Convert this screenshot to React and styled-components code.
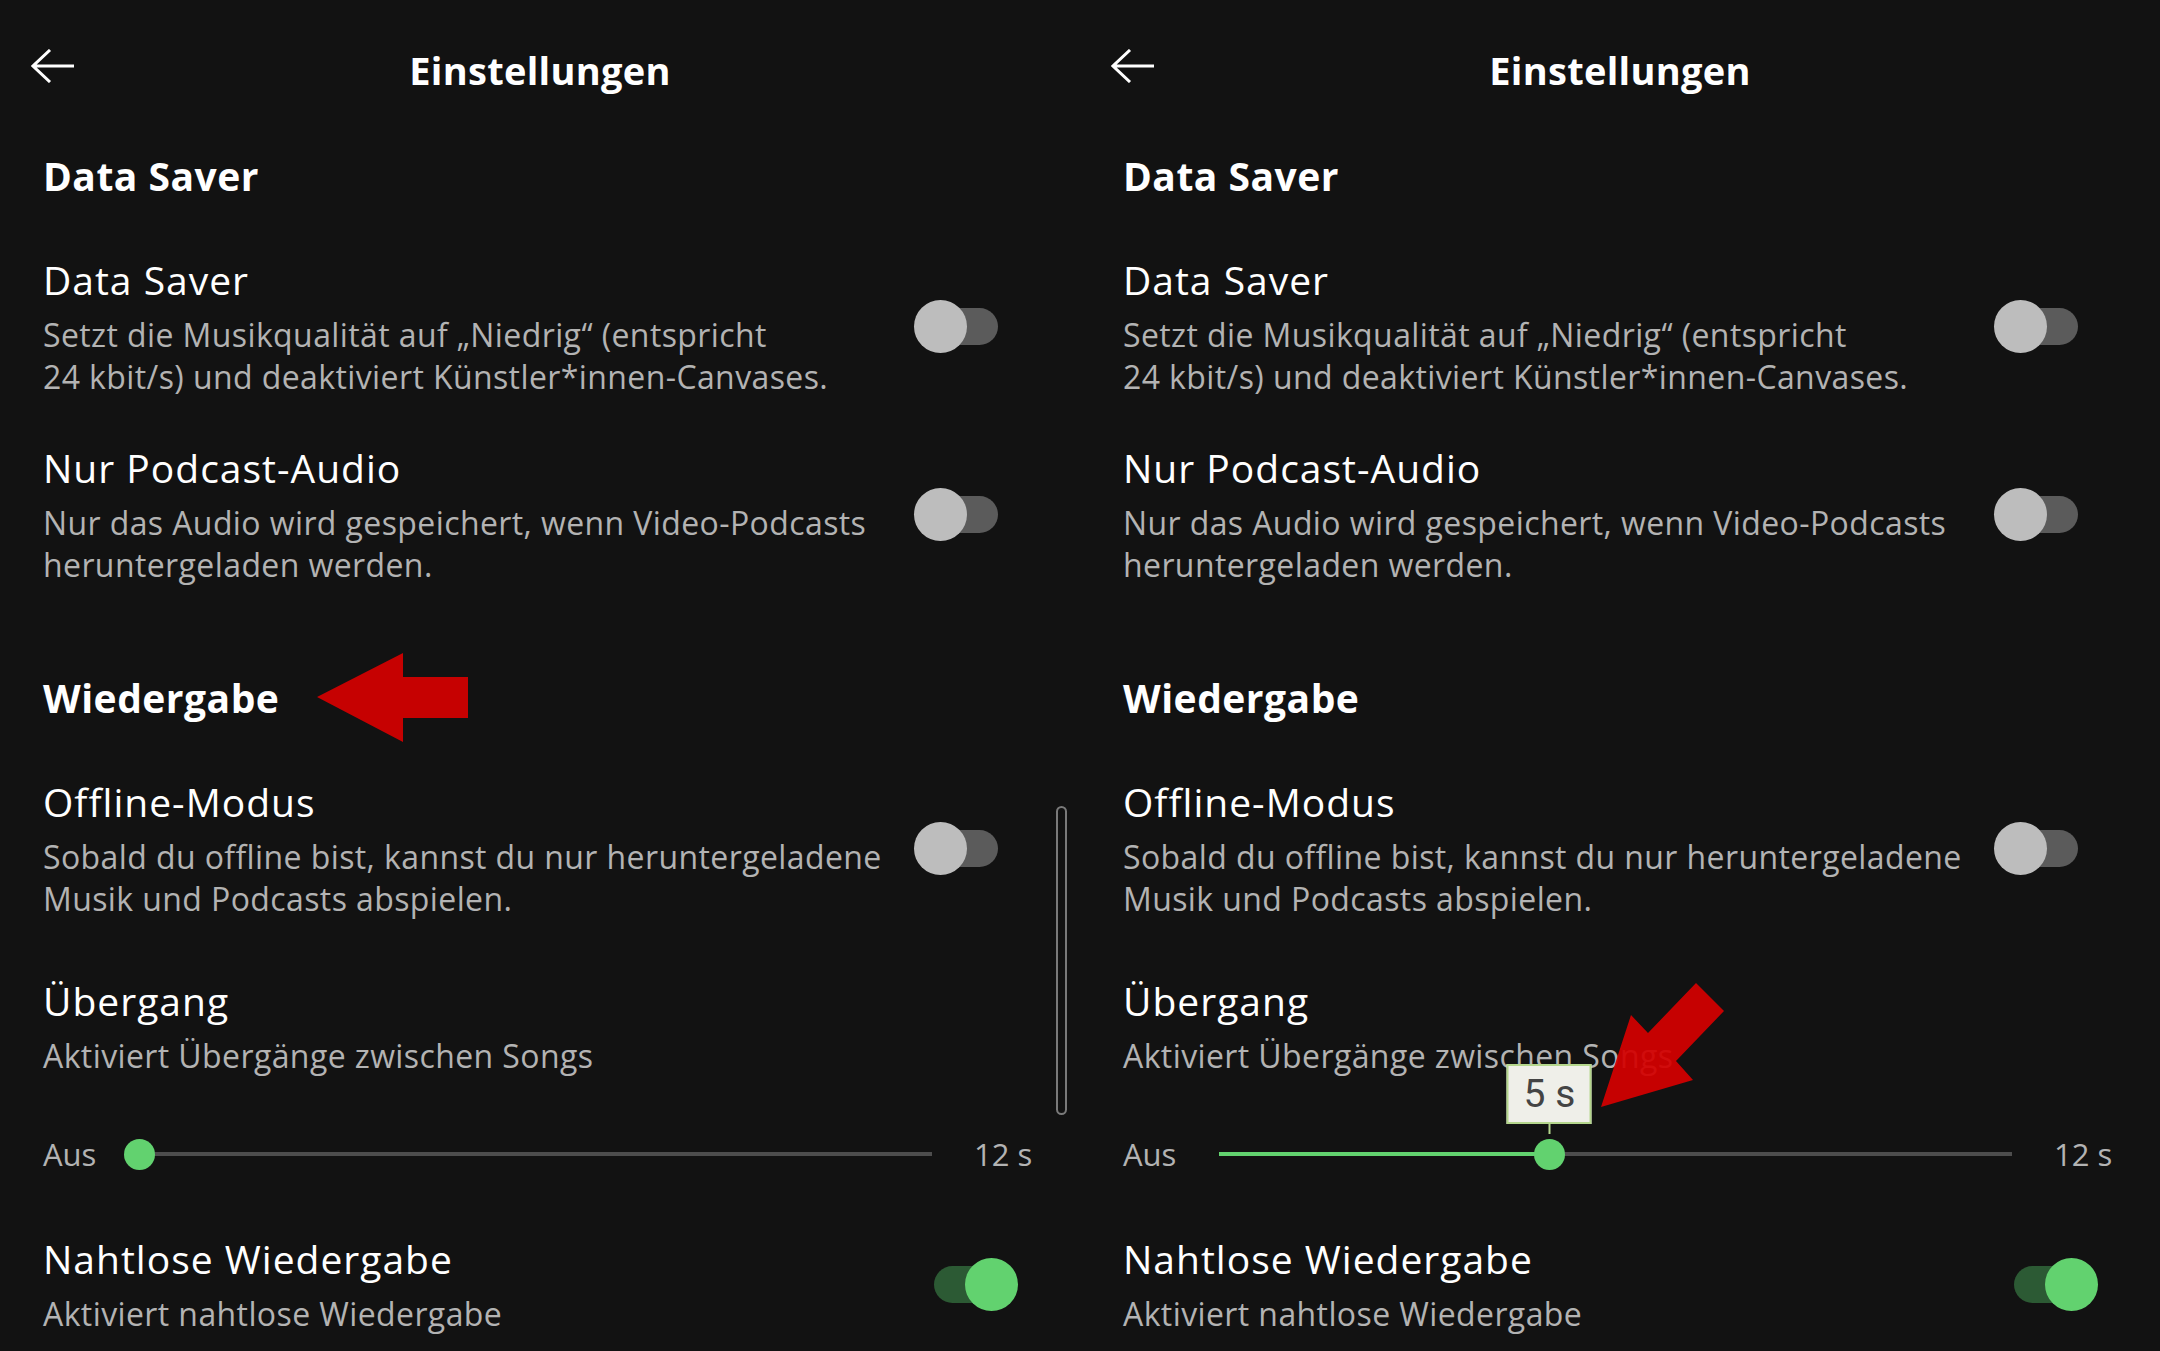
import React from 'react';
import styled, { createGlobalStyle } from 'styled-components';

const GlobalStyle = createGlobalStyle`
  * { box-sizing: border-box; }
  body {
    margin: 0;
    background: #121212;
    font-family: "Open Sans", Lato, sans-serif;
  }
`

const Screens = styled.div`
  display: flex;
  width: 2160px;
  height: 1351px;
  overflow: hidden;
  background: #121212;
`

const Panel = styled.section`
  position: relative;
  width: 1080px;
  flex-shrink: 0;
  color: #fff;
`

const TopBar = styled.header`
  display: grid;
  grid-template-columns: 1fr auto 1fr;
  align-items: center;
  height: 140px;
  padding: 0 31px;
`

const BackButton = styled.button`
  justify-self: start;
  display: flex;
  padding: 0;
  margin-bottom: 8px;
  border: 0;
  background: none;
  color: #fff;
`

const PageTitle = styled.h1`
  margin: 0;
  font-size: 38px;
  font-weight: 700;
  letter-spacing: 0.3px;
  line-height: 52px;
`

const Content = styled.div`
  padding: 0 62px 0 43px;
`

const SectionTitle = styled.h2`
  margin: ${p => p.$top}px 0 30px;
  font-size: 39px;
  font-weight: 700;
  letter-spacing: 0.5px;
  line-height: 52px;
`

const Row = styled.div`
  display: flex;
  align-items: center;
  padding: 22px 0;
`

const TextBlock = styled.div`
  flex: 1;
`

const ItemTitle = styled.div`
  font-size: 39px;
  letter-spacing: 1px;
  line-height: 52px;
  margin-bottom: 8px;
`

const ItemText = styled.div`
  font-size: 32px;
  letter-spacing: 0.4px;
  line-height: 42px;
  color: #b3b3b3;
  white-space: nowrap;
`

const Switch = styled.div`
  position: relative;
  width: 104px;
  height: 52px;
  flex-shrink: 0;
`

const SwitchTrack = styled.div`
  position: absolute;
  left: 20px;
  top: 8px;
  width: 64px;
  height: 37px;
  border-radius: 19px;
  background: ${p => (p.$on ? '#2c5a34' : '#5b5b5b')};
`

const SwitchKnob = styled.div`
  position: absolute;
  top: 0;
  left: ${p => (p.$on ? '51px' : '0')};
  width: 53px;
  height: 53px;
  border-radius: 50%;
  background: ${p => (p.$on ? '#62d26f' : '#bdbdbd')};
`

const CrossfadeBlock = styled.div`
  padding: 33px 0 37px;
`

const SliderRow = styled.div`
  display: flex;
  align-items: center;
  height: 40px;
  margin-top: 57px;
  font-size: 31px;
  color: #b3b3b3;
  white-space: nowrap;
`

const SliderLabel = styled.span`
  width: 52px;
  flex-shrink: 0;
`

const Track = styled.div`
  position: relative;
  flex-shrink: 0;
  width: 793px;
  height: 4px;
  margin: 0 42px 0 44px;
  background: #4d4d4d;
`

const TrackFill = styled.div`
  height: 100%;
  background: #62d26f;
`

const Thumb = styled.div`
  position: absolute;
  top: 50%;
  width: 31px;
  height: 31px;
  margin: -15.5px 0 0 -15.5px;
  border-radius: 50%;
  background: #62d26f;
`

const ValueTip = styled.div`
  position: absolute;
  left: 50%;
  bottom: 46px;
  transform: translateX(-50%);
  display: flex;
  align-items: center;
  justify-content: center;
  width: 85px;
  height: 60px;
  border: 2px solid #b4d68c;
  background: #efefe9;
  color: #444;
  font-family: Roboto, sans-serif;
  font-size: 39px;
  white-space: nowrap;

  &::after {
    content: '';
    position: absolute;
    left: 50%;
    top: 100%;
    width: 2px;
    height: 12px;
    margin-left: -1px;
    background: #b4d68c;
  }
`

const ScrollIndicator = styled.div`
  position: absolute;
  left: 1056px;
  top: 806px;
  width: 11px;
  height: 309px;
  border: 2.5px solid #7a7a7a;
  border-radius: 6px;
`

const Marker = styled.svg`
  position: absolute;
  left: ${p => p.$x}px;
  top: ${p => p.$y}px;
  fill: #d40000;
  opacity: 0.93;
`

function BackArrow() {
  return (
    <svg width="44" height="34" viewBox="0 0 44 34" fill="none" stroke="currentColor" strokeWidth="3">
      <path d="M43 17H2M19 1L2 17l17 16" />
    </svg>
  );
}

function Toggle({ on }) {
  return (
    <Switch>
      <SwitchTrack $on={on} />
      <SwitchKnob $on={on} />
    </Switch>
  );
}

function SettingRow({ title, lines, on }) {
  return (
    <Row>
      <TextBlock>
        <ItemTitle>{title}</ItemTitle>
        {lines.map(line => <ItemText key={line}>{line}</ItemText>)}
      </TextBlock>
      <Toggle on={on} />
    </Row>
  );
}

function CrossfadeSlider({ value, max, showTip }) {
  const pct = (value / max) * 100;
  return (
    <SliderRow>
      <SliderLabel>Aus</SliderLabel>
      <Track>
        <TrackFill style={{ width: `${pct}%` }} />
        <Thumb style={{ left: `${pct}%` }}>
          {showTip && <ValueTip>{value} s</ValueTip>}
        </Thumb>
      </Track>
      <span>{max} s</span>
    </SliderRow>
  );
}

function SettingsScreen({ crossfade, annotated }) {
  return (
    <Panel>
      <TopBar>
        <BackButton><BackArrow /></BackButton>
        <PageTitle>Einstellungen</PageTitle>
        <span />
      </TopBar>
      <Content>
        <SectionTitle $top={10}>Data Saver</SectionTitle>
        <SettingRow
          title="Data Saver"
          lines={['Setzt die Musikqualität auf „Niedrig“ (entspricht', '24 kbit/s) und deaktiviert Künstler*innen-Canvases.']}
        />
        <SettingRow
          title="Nur Podcast-Audio"
          lines={['Nur das Audio wird gespeichert, wenn Video-Podcasts', 'heruntergeladen werden.']}
        />
        <SectionTitle $top={64}>Wiedergabe</SectionTitle>
        <SettingRow
          title="Offline-Modus"
          lines={['Sobald du offline bist, kannst du nur heruntergeladene', 'Musik und Podcasts abspielen.']}
        />
        <CrossfadeBlock>
          <ItemTitle>Übergang</ItemTitle>
          <ItemText>Aktiviert Übergänge zwischen Songs</ItemText>
          <CrossfadeSlider value={crossfade} max={12} showTip={crossfade > 0} />
        </CrossfadeBlock>
        <SettingRow title="Nahtlose Wiedergabe" lines={['Aktiviert nahtlose Wiedergabe']} on />
      </Content>

      {annotated === 'section' && (
        <>
          <ScrollIndicator />
          <Marker $x={317} $y={653} width="151" height="90" viewBox="0 0 151 90">
            <polygon points="0,44 86,0 86,24 151,24 151,65 86,65 86,89" />
          </Marker>
        </>
      )}
      {annotated === 'slider' && (
        <Marker $x={515} $y={978} width="135" height="135" viewBox="0 0 135 135">
          <polygon points="6,129 36,37 53,55 101,5 129,33 81,83 98,102" />
        </Marker>
      )}
    </Panel>
  );
}

export default function App() {
  return (
    <>
      <GlobalStyle />
      <Screens>
        <SettingsScreen crossfade={0} annotated="section" />
        <SettingsScreen crossfade={5} annotated="slider" />
      </Screens>
    </>
  );
}
